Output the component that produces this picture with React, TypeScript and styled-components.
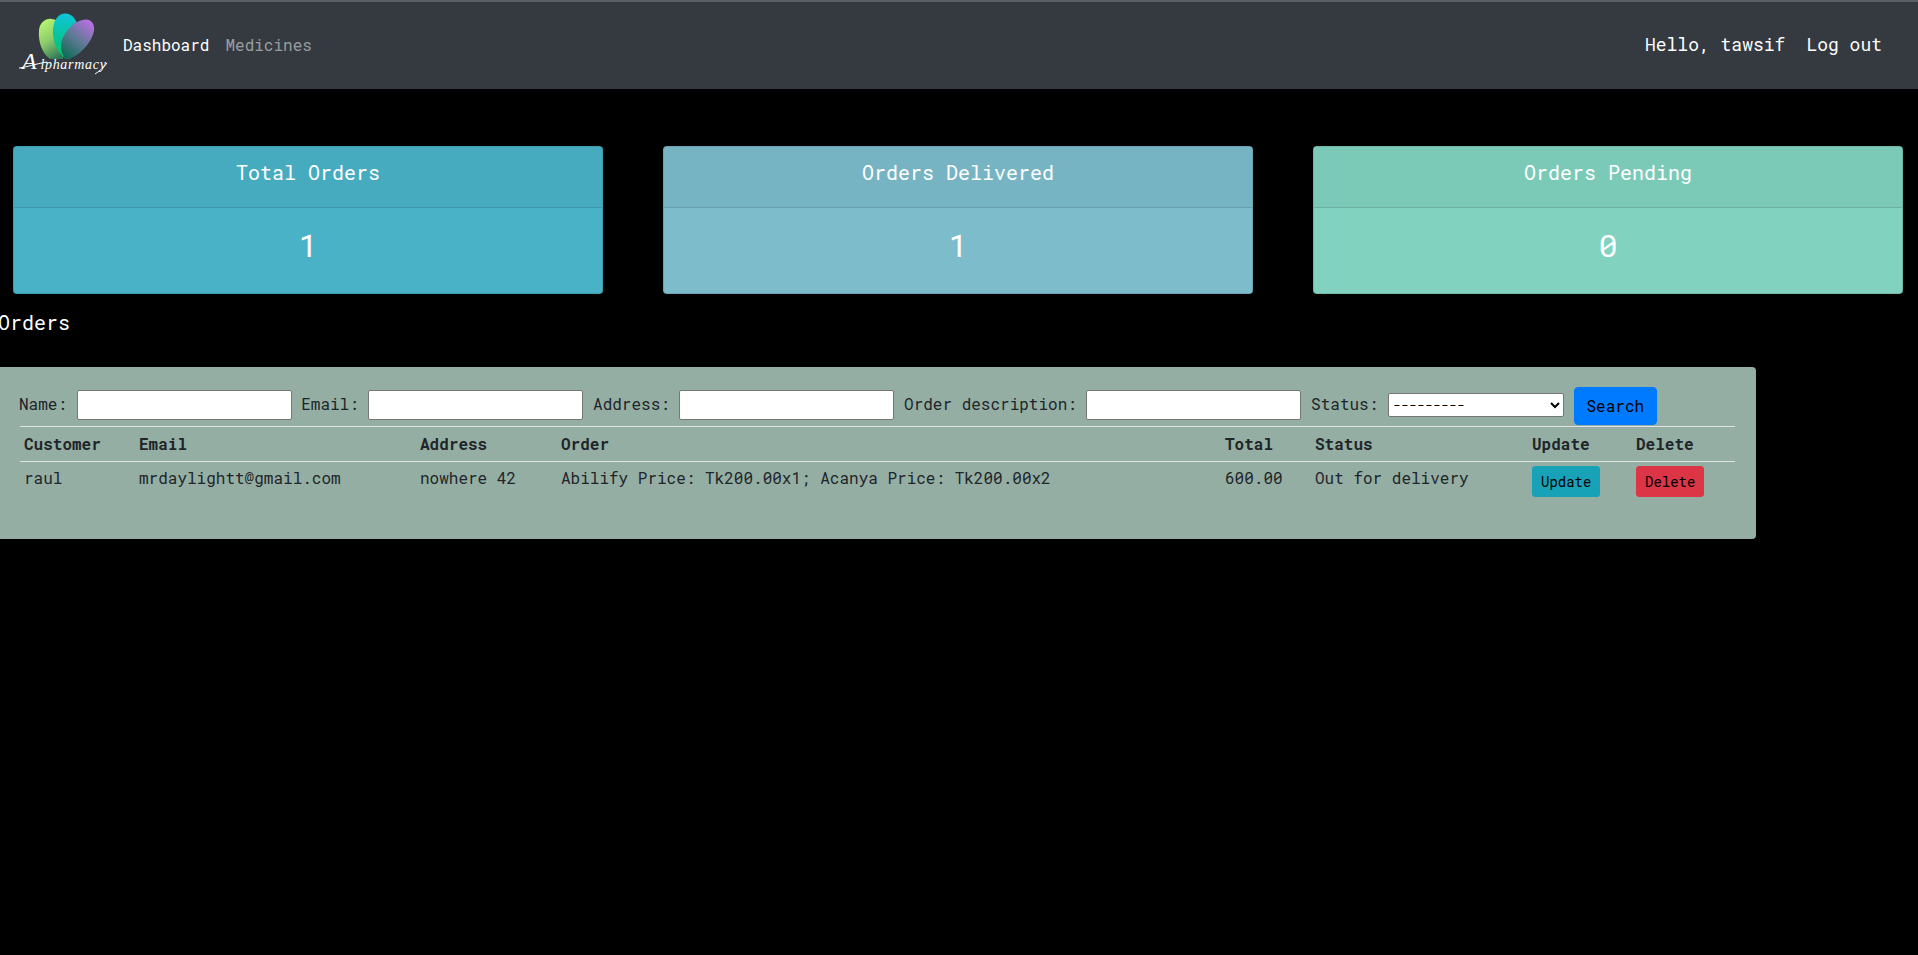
import React from "react";
import styled, { createGlobalStyle } from "styled-components";

const mono = `"Roboto Mono", "DejaVu Sans Mono", "Liberation Mono", monospace`;

const Global = createGlobalStyle`
  * { box-sizing: border-box; }
  html, body { margin: 0; background: #000; }
  body { font-family: ${mono}; font-size: 16px; line-height: 1.5; color: #212529; }
`;

const Nav = styled.nav`
  height: 89px;
  background: #343a40;
  border-top: 2px solid #5c5f63;
  display: flex;
  align-items: center;
  padding: 0 28px 2px 15px;
  box-shadow: inset 0 1px 0 #343a40;
`;
const Brand = styled.div`
  width: 100px;
  height: 72px;
  flex: none;
`;
const NavLink = styled.a<{ $muted?: boolean }>`
  padding: 0 8px;
  color: ${(p) => (p.$muted ? "rgba(255,255,255,.5)" : "#fff")};
`;
const UserLink = styled.a`
  font-size: 18px;
  color: #fff;
  padding: 0 8px;
  & + & {
    margin-left: 5px;
  }
`;
const Spacer = styled.div`
  flex: 1;
`;
const Cards = styled.section`
  display: grid;
  grid-template-columns: repeat(3, 590px);
  column-gap: 60px;
  padding: 57px 0 0 13px;
`;
const Card = styled.div<{ $bg: string }>`
  height: 148px;
  background: ${(p) => p.$bg};
  border: 1px solid rgba(0, 0, 0, 0.125);
  border-radius: 4px;
  color: #fff;
  text-align: center;
  overflow: hidden;
`;
const CardHead = styled.div`
  height: 61px;
  background: rgba(0, 0, 0, 0.04);
  border-bottom: 1px solid rgba(0, 0, 0, 0.125);
  font-size: 20px;
  line-height: 50px;
`;
const CardValue = styled.div`
  font-size: 32px;
  line-height: 74px;
`;
const Title = styled.h5`
  margin: 0 0 0 -2px;
  padding-top: 14px;
  height: 73px;
  font-size: 20px;
  font-weight: 400;
  line-height: 28px;
  color: #fff;
`;
const Panel = styled.section`
  width: 1756px;
  height: 172px;
  background: #94aea4;
  border-radius: 0 4px 4px 0;
  padding: 18px 20px 0;
`;
const Form = styled.form`
  height: 41px;
  margin-left: -1px;
  white-space: pre;
  line-height: 38px;
`;
const Field = styled.input`
  width: 215px;
  height: 30px;
  padding: 1px 2px;
  margin-bottom: 2px;
  border: 1px solid #767676;
  border-radius: 2px;
  background: #fff;
  vertical-align: middle;
`;
const Picker = styled.select`
  width: 176px;
  height: 24px;
  margin-bottom: 2px;
  font-family: ${mono};
  font-size: 13.33px;
  border: 1px solid #767676;
  border-radius: 2px;
  background: #fff;
  color: #000;
  vertical-align: middle;
`;
const Button = styled.button<{ $bg: string; $small?: boolean }>`
  font-family: ${mono};
  font-size: ${(p) => (p.$small ? "14px" : "16px")};
  line-height: ${(p) => (p.$small ? "21px" : "24px")};
  padding: ${(p) => (p.$small ? "4px 8px" : "6px 12px")};
  border: 1px solid ${(p) => p.$bg};
  border-radius: ${(p) => (p.$small ? "3px" : "4px")};
  background: ${(p) => p.$bg};
  color: #000;
  vertical-align: middle;
`;
const Table = styled.table`
  width: 1715px;
  table-layout: fixed;
  border-collapse: collapse;
`;
const Head = styled.th<{ $w: number }>`
  width: ${(p) => p.$w}px;
  padding: 4px;
  text-align: left;
  font-weight: 700;
  height: 35px;
  border-top: 1px solid #dee2e6;
  border-bottom: 1px solid #dee2e6;
`;
const Cell = styled.td`
  padding: 4px;
  vertical-align: top;
  white-space: nowrap;
`;

const Logo = () => (
  <svg width="100" height="72" viewBox="0 0 100 72" aria-label="Alpharmacy">
    <defs>
      <linearGradient id="pA" x1="0.3" y1="0" x2="0.7" y2="1">
        <stop offset="0" stopColor="#b4f56f" />
        <stop offset="0.5" stopColor="#8fcc6c" />
        <stop offset="1" stopColor="#2f7a58" />
      </linearGradient>
      <linearGradient id="pB" x1="0.5" y1="0" x2="0.5" y2="1">
        <stop offset="0" stopColor="#0fc4da" />
        <stop offset="1" stopColor="#00c463" />
      </linearGradient>
      <linearGradient id="pC" x1="0.85" y1="0" x2="0.15" y2="1">
        <stop offset="0" stopColor="#bd6ee6" />
        <stop offset="0.5" stopColor="#5f7a94" />
        <stop offset="1" stopColor="#0c6a56" />
      </linearGradient>
    </defs>
    <path d="M35 50 C27 44 23 33 24 21 C25 13 31 9 37 10 C44 11 48 16 48 22 L48 50 Z" fill="url(#pA)" />
    <path d="M50 49.5 C42 43 37 31 38 20 C39 10 44 4.5 50 4.5 C57 4.5 62 10 63 20 L60 38 C57 44 54 48 50 49.5 Z" fill="url(#pB)" />
    <path d="M50 49.5 C46 44 45 38 47 31 C51 20 61 10.5 71 10.5 C77 10.5 80 16 79 22 C77 32 68 42 60 47 C56 50 52 51 50 49.5 Z" fill="url(#pC)" />
    <text x="7" y="60" fontFamily='"Liberation Serif", serif' fontStyle="italic" fontSize="14" fill="#fff" letterSpacing="0.7">
      <tspan fontSize="24">A</tspan>
      <tspan dx="3">lpharmacy</tspan>
    </text>
    <path d="M4 59 C12 58 20 55 32 53" stroke="#fff" strokeWidth="1" fill="none" />
    <path d="M80 65 C85 62 89 58 92 54" stroke="#fff" strokeWidth="1" fill="none" />
  </svg>
);

const cards = [
  { title: "Total Orders", value: "1", bg: "#4ab2c7" },
  { title: "Orders Delivered", value: "1", bg: "#7cbccb" },
  { title: "Orders Pending", value: "0", bg: "#81d3c0" },
];

const columns = [
  { label: "Customer", w: 115 },
  { label: "Email", w: 281 },
  { label: "Address", w: 141 },
  { label: "Order", w: 664 },
  { label: "Total", w: 90 },
  { label: "Status", w: 217 },
  { label: "Update", w: 104 },
  { label: "Delete", w: 103 },
];

export default function App() {
  return (
    <>
      <Global />
      <Nav>
        <Brand>
          <Logo />
        </Brand>
        <NavLink>Dashboard</NavLink>
        <NavLink $muted>Medicines</NavLink>
        <Spacer />
        <UserLink>Hello, tawsif</UserLink>
        <UserLink>Log out</UserLink>
      </Nav>
      <Cards>
        {cards.map((c) => (
          <Card key={c.title} $bg={c.bg}>
            <CardHead>{c.title}</CardHead>
            <CardValue>{c.value}</CardValue>
          </Card>
        ))}
      </Cards>
      <Title>Orders</Title>
      <Panel>
        <Form>
          {"Name: "}
          <Field />
          {" Email: "}
          <Field />
          {" Address: "}
          <Field />
          {" Order description: "}
          <Field />
          {" Status: "}
          <Picker>
            <option>---------</option>
          </Picker>
          {" "}
          <Button type="button" $bg="#007bff">Search</Button>
        </Form>
        <Table>
          <thead>
            <tr>
              {columns.map((c) => (
                <Head key={c.label} $w={c.w}>{c.label}</Head>
              ))}
            </tr>
          </thead>
          <tbody>
            <tr>
              <Cell>raul</Cell>
              <Cell>mrdaylightt@gmail.com</Cell>
              <Cell>nowhere 42</Cell>
              <Cell>Abilify Price: Tk200.00x1; Acanya Price: Tk200.00x2</Cell>
              <Cell>600.00</Cell>
              <Cell>Out for delivery</Cell>
              <Cell><Button type="button" $small $bg="#17a2b8">Update</Button></Cell>
              <Cell><Button type="button" $small $bg="#dc3545">Delete</Button></Cell>
            </tr>
          </tbody>
        </Table>
      </Panel>
    </>
  );
}
